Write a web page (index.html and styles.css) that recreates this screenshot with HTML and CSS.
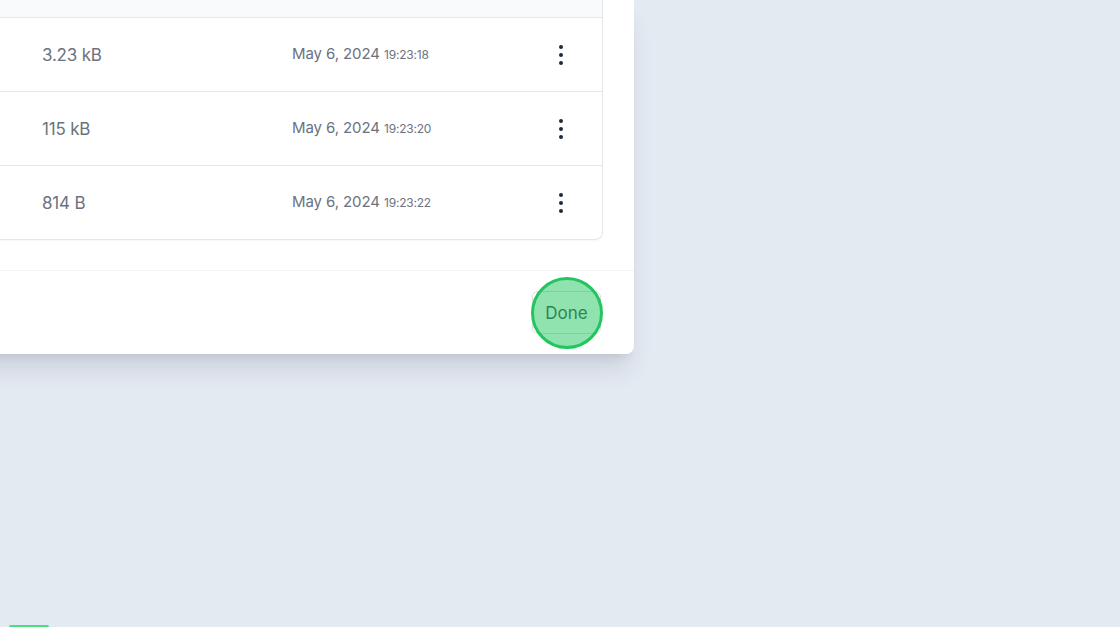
FILE: index.html
```
<!DOCTYPE html>
<html lang="en">
<head>
<meta charset="utf-8">
<title>Files</title>
<link rel="stylesheet" href="styles.css">
</head>
<body>
<div class="page">
  <div class="modal">
    <div class="body">
      <div class="table">
        <div class="thead"></div>
        <div class="row">
          <div class="cell name"></div>
          <div class="cell size">3.23 kB</div>
          <div class="cell date">May 6, 2024 <span class="time">19:23:18</span></div>
          <div class="cell action"><span class="kebab"><i></i><i></i><i></i></span></div>
        </div>
        <div class="row">
          <div class="cell name"></div>
          <div class="cell size">115 kB</div>
          <div class="cell date">May 6, 2024 <span class="time">19:23:20</span></div>
          <div class="cell action"><span class="kebab"><i></i><i></i><i></i></span></div>
        </div>
        <div class="row last">
          <div class="cell name"></div>
          <div class="cell size">814 B</div>
          <div class="cell date">May 6, 2024 <span class="time">19:23:22</span></div>
          <div class="cell action"><span class="kebab"><i></i><i></i><i></i></span></div>
        </div>
      </div>
    </div>
    <div class="footer">
      <button class="btn">Done<span class="highlight"></span></button>
    </div>
  </div>
  <div class="under"><span class="under-green"></span></div>
</div>
</body>
</html>
```
FILE: styles.css
```
* { box-sizing: border-box; }
html, body { margin: 0; padding: 0; }
body {
  width: 1120px;
  height: 627px;
  overflow: hidden;
  background: #e4eaf2;
  font-family: "Inter", "Liberation Sans", sans-serif;
  color: #6b7280;
}
.page {
  position: relative;
  width: 1120px;
  height: 627px;
}
.modal {
  width: 800px;
  margin-left: -166px;
  background: #ffffff;
  border-radius: 0 0 8px 8px;
  box-shadow: 0 20px 25px -5px rgba(30, 41, 59, 0.12), 0 8px 10px -6px rgba(30, 41, 59, 0.1);
}
.body {
  padding: 0 31px 30px 24px;
  border-bottom: 1px solid #f1f3f6;
}
.table {
  border: 1px solid #e5e7eb;
  border-top: none;
  border-radius: 0 0 8px 8px;
  box-shadow: 0 1px 2px rgba(0, 0, 0, 0.04);
  overflow: hidden;
}
.thead {
  height: 18px;
  background: #f9fafb;
  border-bottom: 1px solid #e5e7eb;
}
.row {
  display: grid;
  grid-template-columns: 183px 250px 227px 84px;
  height: 74px;
  border-bottom: 1px solid #e5e7eb;
  align-items: center;
}
.row.last { border-bottom: none; height: 73px; }
.cell { line-height: 20px; }
.cell.size {
  font-size: 17px;
  color: #6b7280;
  letter-spacing: -0.2px;
}
.cell.date {
  font-size: 15px;
  color: #6b7280;
  letter-spacing: -0.1px;
}
.time { font-size: 12px; letter-spacing: -0.2px; }
.cell.action {
  display: flex;
  justify-content: center;
}
.kebab {
  display: flex;
  flex-direction: column;
  gap: 4px;
}
.kebab i {
  display: block;
  width: 4px;
  height: 4px;
  border-radius: 50%;
  background: #1f2937;
}
.footer {
  height: 83px;
  display: flex;
  align-items: center;
  justify-content: flex-end;
  padding-right: 33px;
}
.btn {
  position: relative;
  width: 69px;
  height: 43px;
  border: 1px solid #d9dde3;
  border-radius: 6px;
  background: #ffffff;
  color: #374151;
  font-family: "Inter", "Liberation Sans", sans-serif;
  font-size: 17px;
  padding: 0;
}
.highlight {
  position: absolute;
  left: 50%;
  top: 50%;
  width: 72px;
  height: 72px;
  margin-left: -36px;
  margin-top: -36px;
  border: 3px solid #22c55e;
  border-radius: 50%;
  background: rgba(34, 197, 94, 0.5);
}
.under {
  position: absolute;
  left: 9px;
  bottom: 0;
}
.under-green {
  display: block;
  width: 40px;
  height: 2px;
  background: #4ade80;
  border-radius: 2px 2px 0 0;
}
```
